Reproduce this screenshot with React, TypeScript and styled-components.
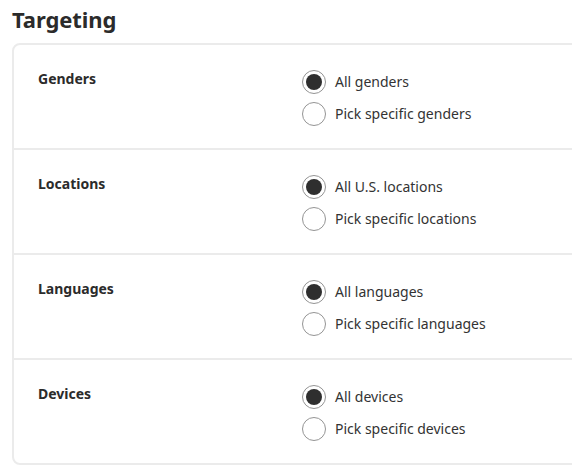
import React from "react";
import styled, { createGlobalStyle } from "styled-components";

const Global = createGlobalStyle`
  html, body { margin: 0; padding: 0; background: #fff; overflow: hidden; }
  body { font-family: "Noto Sans", "Open Sans", sans-serif; color: #333; }
`;

const Page = styled.div`
  padding: 3px 0 0 12px;
  width: 640px;
`;

const Title = styled.h2`
  margin: 0 0 7px 0;
  font-size: 22px;
  line-height: 33px;
  font-weight: 700;
  color: #2b2b2b;
  letter-spacing: -0.1px;
`;

const Card = styled.div`
  border: 2px solid #ebebeb;
  border-radius: 8px;
  background: #fff;
`;

const Row = styled.div<{ $last?: boolean }>`
  display: grid;
  grid-template-columns: 264px 1fr;
  align-items: start;
  height: 78px;
  padding: 25px 24px 0 24px;
  border-bottom: ${(p) => (p.$last ? "none" : "2px solid #ebebeb")};
`;

const Label = styled.div`
  font-size: 14px;
  font-weight: 700;
  line-height: 18px;
  color: #2b2b2b;
`;

const Options = styled.div`
  display: flex;
  flex-direction: column;
  gap: 8px;
`;

const Option = styled.label`
  display: flex;
  align-items: center;
  gap: 9px;
  font-size: 14px;
  line-height: 24px;
  color: #333;
  cursor: pointer;
`;

const Circle = styled.span<{ $on?: boolean }>`
  width: 24px;
  height: 24px;
  box-sizing: border-box;
  border-radius: 50%;
  border: 1px solid #949494;
  display: flex;
  align-items: center;
  justify-content: center;
  flex: none;
  &::after {
    content: "";
    display: ${(p) => (p.$on ? "block" : "none")};
    width: 16px;
    height: 16px;
    border-radius: 50%;
    background: #2f2f2f;
  }
`;

const rows = [
  { label: "Genders", a: "All genders", b: "Pick specific genders" },
  { label: "Locations", a: "All U.S. locations", b: "Pick specific locations" },
  { label: "Languages", a: "All languages", b: "Pick specific languages" },
  { label: "Devices", a: "All devices", b: "Pick specific devices" },
];

export default function App() {
  return (
    <Page>
      <Global />
      <Title>Targeting</Title>
      <Card>
        {rows.map((r, i) => (
          <Row key={r.label} $last={i === rows.length - 1}>
            <Label>{r.label}</Label>
            <Options>
              <Option>
                <Circle $on />
                {r.a}
              </Option>
              <Option>
                <Circle />
                {r.b}
              </Option>
            </Options>
          </Row>
        ))}
      </Card>
    </Page>
  );
}
